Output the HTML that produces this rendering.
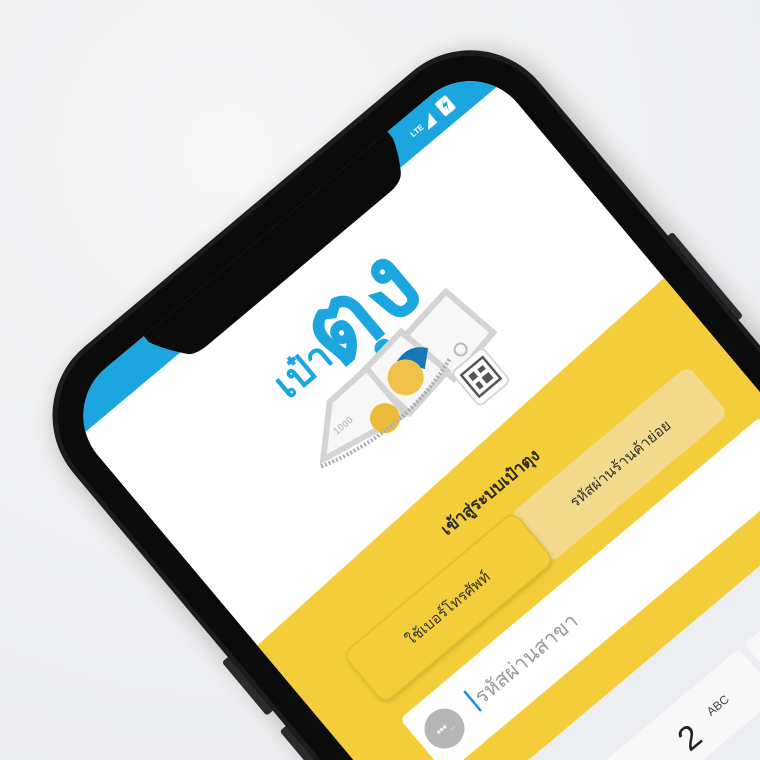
<!DOCTYPE html>
<html><head><meta charset="utf-8"><style>
html,body{margin:0;padding:0;width:760px;height:760px;overflow:hidden;background:#eeeff1}
svg{display:block}
text{font-family:"Liberation Sans","Noto Sans CJK SC",sans-serif}
</style></head><body>
<svg width="760" height="760" viewBox="0 0 760 760" xmlns="http://www.w3.org/2000/svg">
<defs>
<radialGradient id="bg" cx="0.3" cy="0.2" r="1">
<stop offset="0" stop-color="#f6f6f7"/><stop offset="1" stop-color="#e9eaec"/></radialGradient>
<clipPath id="scr"><rect x="0" y="0" width="548" height="1200" rx="62"/></clipPath>
<filter id="sh" x="-20%" y="-20%" width="140%" height="140%"><feGaussianBlur stdDeviation="10"/></filter>
<filter id="sh2" x="-20%" y="-20%" width="140%" height="140%"><feGaussianBlur stdDeviation="3"/></filter>
</defs>
<rect width="760" height="760" fill="url(#bg)"/>
<g transform="translate(58,408) rotate(-40)">
  <rect x="-34" y="-26" width="620" height="1200" rx="92" fill="#000" opacity="0.18" filter="url(#sh)"/>
  <rect x="-38" y="300" width="10" height="70" rx="3" fill="#2b2b2d"/>
  <rect x="-38" y="390" width="10" height="70" rx="3" fill="#2b2b2d"/>
  <rect x="574" y="260" width="10" height="110" rx="3" fill="#2b2b2d"/>
  <rect x="-30" y="-30" width="608" height="1200" rx="90" fill="#1c1c1e"/>
  <rect x="-25" y="-25" width="598" height="1190" rx="86" fill="#0b0b0c"/>
  <g clip-path="url(#scr)">
    <rect x="0" y="0" width="548" height="1200" fill="#ffffff"/>
    <rect x="0" y="0" width="548" height="36" fill="#1ca6df"/>
    <path d="M112,-10 L112,8 Q118,22 134,42 Q140,48 156,48 L392,48 Q408,48 414,40 Q426,22 430,8 L430,-10 Z" fill="#0b0b0c"/>
    <text x="446" y="21" font-size="8" fill="#fff" font-weight="bold">LTE</text>
    <path d="M462,25 L474,12 L474,25 Z" fill="#fff"/>
    <rect x="484" y="9" width="14" height="17" rx="2" fill="#fff"/>
    <path d="M492,11 L488,18 L492,18 L490,24 L495,15 L491,15 Z" fill="#1ca6df"/>
    <!-- logo -->
    <text x="212" y="142" font-size="40" font-weight="bold" fill="#1ca6df" text-anchor="middle">เป๋า</text>
    <text x="296" y="152" font-size="104" font-weight="bold" fill="#1ca6df" text-anchor="middle">ตุง</text>
    <!-- illustration -->
    <g>
      <polygon points="312,168 372,160 382,222 322,232" fill="#f7f7f7" stroke="#d4d4d4" stroke-width="6"/>
      <polygon points="258,168 312,162 322,222 266,230" fill="#f7f7f7" stroke="#d4d4d4" stroke-width="6"/>
      <text x="270" y="205" font-size="10" fill="#c6c6c6" font-weight="bold">1000</text>
      <polygon points="212,170 262,168 262,228 170,210" fill="#f7f7f7" stroke="#d4d4d4" stroke-width="6"/>
      <text x="196" y="200" font-size="10" fill="#c6c6c6" font-weight="bold">1000</text>
      <path d="M290,182 Q310,176 322,192 L306,206 Z" fill="#1679b5"/>
      <circle cx="286" cy="200" r="18" fill="#f0c14a"/>
      <circle cx="244" cy="218" r="15" fill="#eebc3c"/>
      <path d="M164,214 Q250,242 332,214" fill="none" stroke="#a9adb3" stroke-width="4" stroke-dasharray="2 2"/>
      <rect x="324" y="226" width="40" height="44" rx="5" fill="#fff" stroke="#d6d6d6" stroke-width="2"/>
      <rect x="330" y="234" width="28" height="28" fill="#fff" stroke="#555" stroke-width="2.5"/>
      <rect x="335" y="239" width="7" height="7" fill="#555"/>
      <rect x="346" y="240" width="7" height="5" fill="#555"/>
      <rect x="335" y="250" width="5" height="7" fill="#555"/>
      <rect x="344" y="249" width="9" height="8" fill="#555"/>
      <circle cx="346" cy="214" r="6" fill="none" stroke="#bbb" stroke-width="2"/>
    </g>
    <path d="M0,310 L548,290 L548,1200 L0,1200 Z" fill="#f4ce3a"/>
    <text x="277" y="348" font-size="17" font-weight="bold" fill="#2a2a2a" text-anchor="middle">เข้าสู่ระบบเป๋าตุง</text>
    <rect x="278" y="372" width="232" height="64" rx="10" fill="#f3da8d"/>
    <rect x="60" y="374" width="222" height="64" rx="10" fill="#000" opacity="0.2" filter="url(#sh2)"/>
    <rect x="60" y="372" width="222" height="64" rx="10" fill="#f4ce3a" stroke="#e6bd2a" stroke-width="1.5"/>
    <text x="170" y="409" font-size="15" fill="#333" text-anchor="middle">ใช้เบอร์โทรศัพท์</text>
    <text x="395" y="409" font-size="15" fill="#333" text-anchor="middle">รหัสผ่านร้านค้าย่อย</text>
    <rect x="62" y="458" width="470" height="72" rx="6" fill="#ffffff"/>
    <circle cx="90" cy="494" r="20" fill="#b6b6b6"/>
    <text x="90" y="498" font-size="10" fill="#fff" text-anchor="middle" font-weight="bold">***_</text>
    <rect x="128" y="478" width="2.5" height="26" fill="#1a8fe0"/>
    <text x="134" y="500" font-size="21" fill="#9a9a9a">รหัสผ่านสาขา</text>
    <rect x="0" y="572" width="548" height="700" fill="#eceef1"/>
    <rect x="8" y="622" width="176" height="62" rx="6" fill="#f8f8f9"/>
    <rect x="191" y="622" width="176" height="62" rx="6" fill="#f8f8f9"/>
    <rect x="374" y="622" width="176" height="62" rx="6" fill="#f8f8f9"/>
    <text x="272" y="670" font-size="34" fill="#222" text-anchor="middle">2</text>
    <text x="302" y="656" font-size="12" fill="#444">ABC</text>
  </g>
</g>
</svg>
</body></html>
